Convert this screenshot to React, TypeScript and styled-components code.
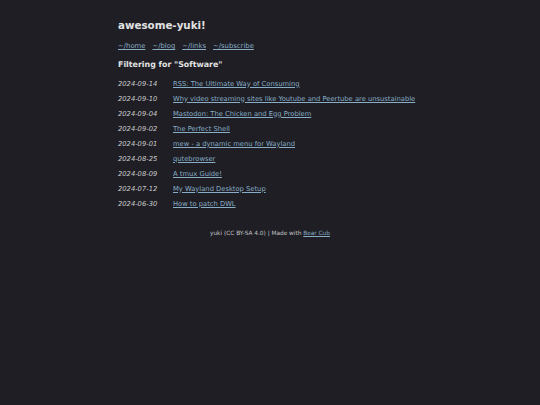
import { FC } from 'react';
import styled, { createGlobalStyle } from 'styled-components';

const GlobalStyle = createGlobalStyle`
  html, body {
    margin: 0;
    padding: 0;
    background: #1e1e24;
  }
  body {
    font-family: 'DejaVu Sans', Verdana, sans-serif;
    color: #dddddd;
  }
`;

const Page = styled.div`
  min-height: 405px;
  background: #1e1e24;
  box-sizing: border-box;
  padding: 9px 0 0;
`;

const Main = styled.div`
  width: 304px;
  margin: 0 auto;
`;

const Title = styled.h1`
  margin: 10px 0 0;
  font-size: 10.3px;
  line-height: 12px;
  font-weight: bold;
  color: #e2e2e2;
`;

const Nav = styled.nav`
  display: flex;
  gap: 7px;
  margin-top: 10px;
  font-size: 6.85px;
  line-height: 10px;
`;

const Link = styled.a`
  color: #88adc6;
  text-decoration: underline;
`;

const Heading = styled.h3`
  margin: 9px 0 0;
  font-size: 7.9px;
  line-height: 9.5px;
  font-weight: bold;
  color: #e2e2e2;
`;

const PostList = styled.ul`
  list-style: none;
  margin: 7px 0 0;
  padding: 0;
`;

const PostRow = styled.li`
  display: flex;
  font-size: 6.75px;
  line-height: 15px;
`;

const PostDate = styled.span`
  flex: 0 0 55px;
  font-style: italic;
  color: #cccccc;
`;

const Footer = styled.footer`
  margin-top: 18px;
  text-align: center;
  font-size: 5.8px;
  line-height: 7px;
  color: #c4c4c4;
`;

const posts = [
  ['2024-09-14', 'RSS: The Ultimate Way of Consuming'],
  ['2024-09-10', 'Why video streaming sites like Youtube and Peertube are unsustainable'],
  ['2024-09-04', 'Mastodon: The Chicken and Egg Problem'],
  ['2024-09-02', 'The Perfect Shell'],
  ['2024-09-01', 'mew - a dynamic menu for Wayland'],
  ['2024-08-25', 'qutebrowser'],
  ['2024-08-09', 'A tmux Guide!'],
  ['2024-07-12', 'My Wayland Desktop Setup'],
  ['2024-06-30', 'How to patch DWL'],
];

const App: FC = () => (
  <Page>
    <GlobalStyle />
    <Main>
      <Title>awesome-yuki!</Title>
      <Nav>
        <Link href="#">~/home</Link>
        <Link href="#">~/blog</Link>
        <Link href="#">~/links</Link>
        <Link href="#">~/subscribe</Link>
      </Nav>
      <Heading>Filtering for "Software"</Heading>
      <PostList>
        {posts.map(([date, title]) => (
          <PostRow key={date}>
            <PostDate>{date}</PostDate>
            <Link href="#">{title}</Link>
          </PostRow>
        ))}
      </PostList>
    </Main>
    <Footer>
      yuki (CC BY-SA 4.0) | Made with <Link href="#">Bear Cub</Link>
    </Footer>
  </Page>
);

export default App;
